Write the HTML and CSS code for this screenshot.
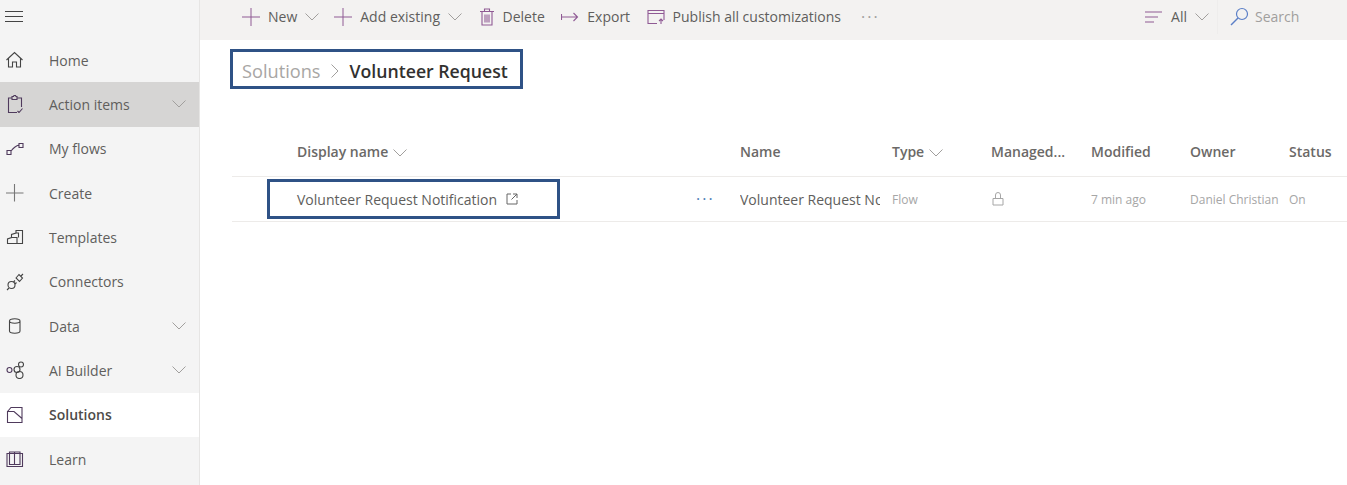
FILE: index.html
```html
<!DOCTYPE html>
<html lang="en">
<head>
    <meta charset="UTF-8">
    <meta name="viewport" content="width=device-width, initial-scale=1.0">
    <title>Volunteer Request - Solutions</title>
    <link rel="stylesheet" href="styles.css">
</head>
<body>
<div class="app">
    <nav class="sidebar">
        <div class="burger">
            <svg width="18" height="14" viewBox="0 0 18 14"><path d="M0 1.5h18M0 6.5h18M0 11.5h18" class="ln-dark"/></svg>
        </div>
        <a class="nav-item">
            <svg class="nav-icon" viewBox="0 0 18 18"><path d="M.5 9 8.500 1.500l8 7.500M2.500 7.500V16h4v-5h4v5h4V7.500" class="ln-dark"/></svg>
            <span class="nav-label">Home</span>
        </a>
        <a class="nav-item active">
            <svg class="nav-icon" viewBox="0 0 18 18"><path d="M6 3H2.500v14.500H11M11 3h4.500v9M6 4.500v-3h1.500l.5-1h1.500l.5 1H11v3zM11.500 16l1.500 1.500 3.500-4" class="ln-plum"/></svg>
            <span class="nav-label">Action items</span>
            <svg class="chev" viewBox="0 0 14 8"><path d="M.5.5 7 7l6.500-6.500"/></svg>
        </a>
        <a class="nav-item">
            <svg class="nav-icon" viewBox="0 0 18 18"><path d="M1 10.500h4v4H1zM13 3.500h4v4h-4zM5 11Q9 6 13 5" class="ln-plum"/></svg>
            <span class="nav-label">My flows</span>
        </a>
        <a class="nav-item">
            <svg class="nav-icon" viewBox="0 0 18 18"><path d="M0 9h17.500M8.500 0v17.500" class="ln-grey"/></svg>
            <span class="nav-label">Create</span>
        </a>
        <a class="nav-item">
            <svg class="nav-icon" viewBox="0 0 18 18"><path d="M1.500 15.500V11l4-1.500V6.500L10 5V2.500h6.500v13zM5.500 9.500h5.500v6M10 5h2.500v4.500" class="ln-dark"/></svg>
            <span class="nav-label">Templates</span>
        </a>
        <a class="nav-item">
            <svg class="nav-icon" viewBox="0 0 18 18"><circle cx="5.500" cy="12" r="3.500" class="ln-dark"/><path d="M1 17l2-2M7.500 9 9 7.500M9 11l1.500-1.500M10 5l3-3.500 3.500 3.500-3 3.500zM15 3l2-2" class="ln-dark"/></svg>
            <span class="nav-label">Connectors</span>
        </a>
        <a class="nav-item">
            <svg class="nav-icon" viewBox="0 0 18 18"><path d="M3.500 4v10c0 3 10.500 3 10.500 0V4c0-3-10.500-3-10.500 0c0 3 10.500 3 10.500 0" class="ln-dark"/></svg>
            <span class="nav-label">Data</span>
            <svg class="chev" viewBox="0 0 14 8"><path d="M.5.5 7 7l6.500-6.500"/></svg>
        </a>
        <a class="nav-item">
            <svg class="nav-icon" viewBox="0 0 18 18"><circle cx="3.500" cy="9" r="2.500" class="ln-plum"/><circle cx="15" cy="3.500" r="2.500" class="ln-dark"/><circle cx="13.500" cy="14" r="3.500" class="ln-dark"/><circle cx="11" cy="8.500" r="3" class="ln-dark"/></svg>
            <span class="nav-label">AI Builder</span>
            <svg class="chev" viewBox="0 0 14 8"><path d="M.5.5 7 7l6.500-6.500"/></svg>
        </a>
        <a class="nav-item current">
            <svg class="nav-icon" viewBox="0 0 18 18"><path d="M1.500 5.500 5 1.500h11v15H1.500v-11H8l8 7" class="ln-plum"/></svg>
            <span class="nav-label">Solutions</span>
        </a>
        <a class="nav-item">
            <svg class="nav-icon" viewBox="0 0 18 18"><path d="M1 3.500h15.500v13H1zM3.500 2v12.500h5V2zM8.500 2v12.500H14V2z" class="ln-plum"/></svg>
            <span class="nav-label">Learn</span>
        </a>
    </nav>

    <div class="main">
        <header class="toolbar">
            <button class="tool first">
                <svg class="plus" viewBox="0 0 18 18"><path d="M0 9h18M9 0v18"/></svg>New
                <svg class="chev" viewBox="0 0 14 8"><path d="M.5.5 7 7l6.500-6.500"/></svg>
            </button>
            <button class="tool add">
                <svg class="plus" viewBox="0 0 18 18"><path d="M0 9h18M9 0v18"/></svg>Add existing
                <svg class="chev" viewBox="0 0 14 8"><path d="M.5.5 7 7l6.500-6.500"/></svg>
            </button>
            <button class="tool">
                <svg class="tool-icon" viewBox="0 0 16 18"><path d="M1 3.500h14M3 3.500V17h10V3.500M5.500 3.500V1h5v2.500M6 6.500v8M8 6.500v8M10 6.500v8" class="ln-plum"/></svg>Delete
            </button>
            <button class="tool">
                <svg class="tool-icon wide" viewBox="0 0 18 18"><path d="M.5 6v6M.5 9h16M12.500 5l4 4-4 4" class="ln-plum"/></svg>Export
            </button>
            <button class="tool">
                <svg class="tool-icon wide" viewBox="0 0 18 16"><path d="M10 14.500H1v-13h16V11M1 4.500h16M14 15v-5M12 12l2-2 2 2" class="ln-plum"/></svg>Publish all customizations
            </button>
            <span class="more">···</span>
            <div class="toolbar-right">
                <button class="tool filter">
                    <svg class="tool-icon wide" viewBox="0 0 18 12"><path d="M0 1h17M0 6h13M0 11h9" class="ln-plum"/></svg>All
                    <svg class="chev" viewBox="0 0 14 8"><path d="M.5.5 7 7l6.500-6.500"/></svg>
                </button>
                <div class="search">
                    <svg width="19" height="19" viewBox="0 0 19 19"><circle cx="12" cy="7" r="5.500" fill="none" stroke="#5b7fc7" stroke-width="1.200"/><path d="M8 11 1 18" fill="none" stroke="#5b7fc7" stroke-width="1.400"/></svg>
                    <span>Search</span>
                </div>
            </div>
        </header>

        <div class="crumbs">
            <span class="crumb-root">Solutions</span>
            <svg class="crumb-sep" viewBox="0 0 8 14"><path d="M.5.5 7 7 .5 13.500"/></svg>
            <span class="crumb-current">Volunteer Request</span>
        </div>

        <div class="table">
            <div class="row head">
                <div class="cell-first">Display name <svg class="chev" viewBox="0 0 14 8"><path d="M.5.5 7 7l6.500-6.500"/></svg></div>
                <div></div>
                <div>Name</div>
                <div>Type <svg class="chev small" viewBox="0 0 14 8"><path d="M.5.5 7 7l6.500-6.500"/></svg></div>
                <div>Managed...</div>
                <div>Modified</div>
                <div>Owner</div>
                <div>Status</div>
            </div>
            <div class="row body">
                <div class="name-box">
                    Volunteer Request Notification
                    <svg width="12" height="12" viewBox="0 0 12 12"><path d="M5 1H1v10h10V7M7 1h4v4M11 1 5.500 6.500" fill="none" stroke="#666" stroke-width="1"/></svg>
                </div>
                <div class="dots">···</div>
                <div class="clip name-clip">Volunteer Request Notification</div>
                <div class="soft">Flow</div>
                <div class="soft">
                    <svg class="lock" width="12" height="14" viewBox="0 0 12 14"><path d="M1 6.500h10V13H1zM3.500 6.500V3a2.500 2.500 0 0 1 5 0v3.500" fill="none" stroke="#a6a6a6"/></svg>
                </div>
                <div class="soft">7 min ago</div>
                <div class="soft clip owner-clip">Daniel Christian</div>
                <div class="soft">On</div>
            </div>
        </div>
    </div>
</div>
</body>
</html>
```
FILE: styles.css
```css
* {
    box-sizing: border-box;
}
html, body {
    margin: 0;
    height: 100%;
    overflow: hidden;
}
body {
    font-family: "Open Sans", "Noto Sans", Arial, sans-serif;
    font-size: 14px;
    color: #605e5c;
    background: #fff;
}
.app {
    display: flex;
    height: 485px;
}

/* icon strokes */
.ln-dark, .ln-plum, .ln-grey {
    fill: none;
    stroke-width: 1.1;
}
.ln-dark { stroke: #444; }
.ln-plum { stroke: #4f3a5c; }
.ln-grey { stroke: #777; }
.tool .ln-plum { stroke: #8f5a94; }

.chev {
    width: 14px;
    height: 8px;
    fill: none;
    stroke: #a19f9d;
    stroke-width: 1;
    flex-shrink: 0;
}

/* sidebar */
.sidebar {
    width: 200px;
    flex-shrink: 0;
    background: #f4f4f4;
    border-right: 1px solid #e6e5e4;
}
.burger {
    height: 38px;
    padding: 9px 0 0 5px;
}
.nav-item {
    display: flex;
    align-items: center;
    height: 44.33px;
    padding: 0 13px 0 6px;
    color: #605e5c;
}
.nav-icon {
    width: 18px;
    height: 18px;
    flex-shrink: 0;
}
.nav-label {
    margin-left: 25px;
    flex: 1;
}
.active {
    background: #d6d5d4;
}
.current {
    background: #fff;
    font-weight: 600;
    color: #4d4b49;
}

/* toolbar */
.main {
    flex: 1;
    min-width: 0;
}
.toolbar {
    display: flex;
    align-items: center;
    height: 40px;
    padding: 0 0 7px 42px;
    background: #f3f2f1;
}
.tool {
    display: flex;
    align-items: center;
    gap: 8px;
    margin: 0 0 0 16.5px;
    padding: 0;
    border: none;
    background: none;
    font: inherit;
    color: #605e5c;
}
.first {
    margin-left: 0;
}
.add {
    margin-left: 15px;
}
.plus {
    width: 18px;
    height: 18px;
    fill: none;
    stroke: #8f5a94;
    stroke-width: 1;
}
.tool-icon {
    width: 16px;
    height: 18px;
}
.tool-icon.wide {
    width: 18px;
}
.more {
    margin-left: 20px;
    color: #a19f9d;
    font-size: 16px;
    letter-spacing: 2px;
}
.toolbar-right {
    display: flex;
    align-items: center;
    margin-left: auto;
}
.filter {
    margin: 0;
}
.search {
    display: flex;
    align-items: center;
    gap: 6px;
    width: 130px;
    height: 34px;
    margin-left: 8px;
    padding-left: 12px;
    border-left: 1px solid #eeedec;
    color: #a19f9d;
}

/* breadcrumb, boxed in the screenshot */
.crumbs {
    display: flex;
    align-items: center;
    width: 293px;
    height: 40px;
    margin: 9px 0 0 30px;
    padding: 4px 0 0 9px;
    border: 3px solid #2f5286;
    white-space: nowrap;
}
.crumb-root {
    font-size: 18.2px;
    color: #a8a6a4;
}
.crumb-sep {
    width: 8px;
    height: 14px;
    margin: 0 11px 0 10px;
    fill: none;
    stroke: #a19f9d;
}
.crumb-current {
    font-size: 17.7px;
    font-weight: 600;
    color: #323130;
}

/* table */
.table {
    margin: 43px 0 0 32px;
}
.row {
    display: grid;
    grid-template-columns: 327px 181px 152px 99px 100px 99px 99px 58px;
    align-items: center;
}
.head {
    height: 45px;
    padding-bottom: 6px;
    border-bottom: 1px solid #edebe9;
    font-weight: 600;
    color: #6b6967;
}
.cell-first {
    padding-left: 65px;
}
.head .chev {
    margin-left: 1px;
}
.body {
    height: 45px;
    border-bottom: 1px solid #edebe9;
}
.name-box {
    display: flex;
    align-items: center;
    gap: 9px;
    width: 293px;
    height: 40px;
    margin-left: 35px;
    padding-left: 27px;
    border: 3px solid #2f5286;
    white-space: nowrap;
}
.dots {
    padding-left: 137px;
    color: #4f7fb8;
    font-size: 16px;
    letter-spacing: 2px;
}
.clip {
    overflow: hidden;
    white-space: nowrap;
}
.name-clip {
    width: 140px;
}
.owner-clip {
    width: 90px;
}
.soft {
    font-size: 12px;
    color: #a6a6a6;
}
.lock {
    display: block;
    margin-left: 1px;
}
```
